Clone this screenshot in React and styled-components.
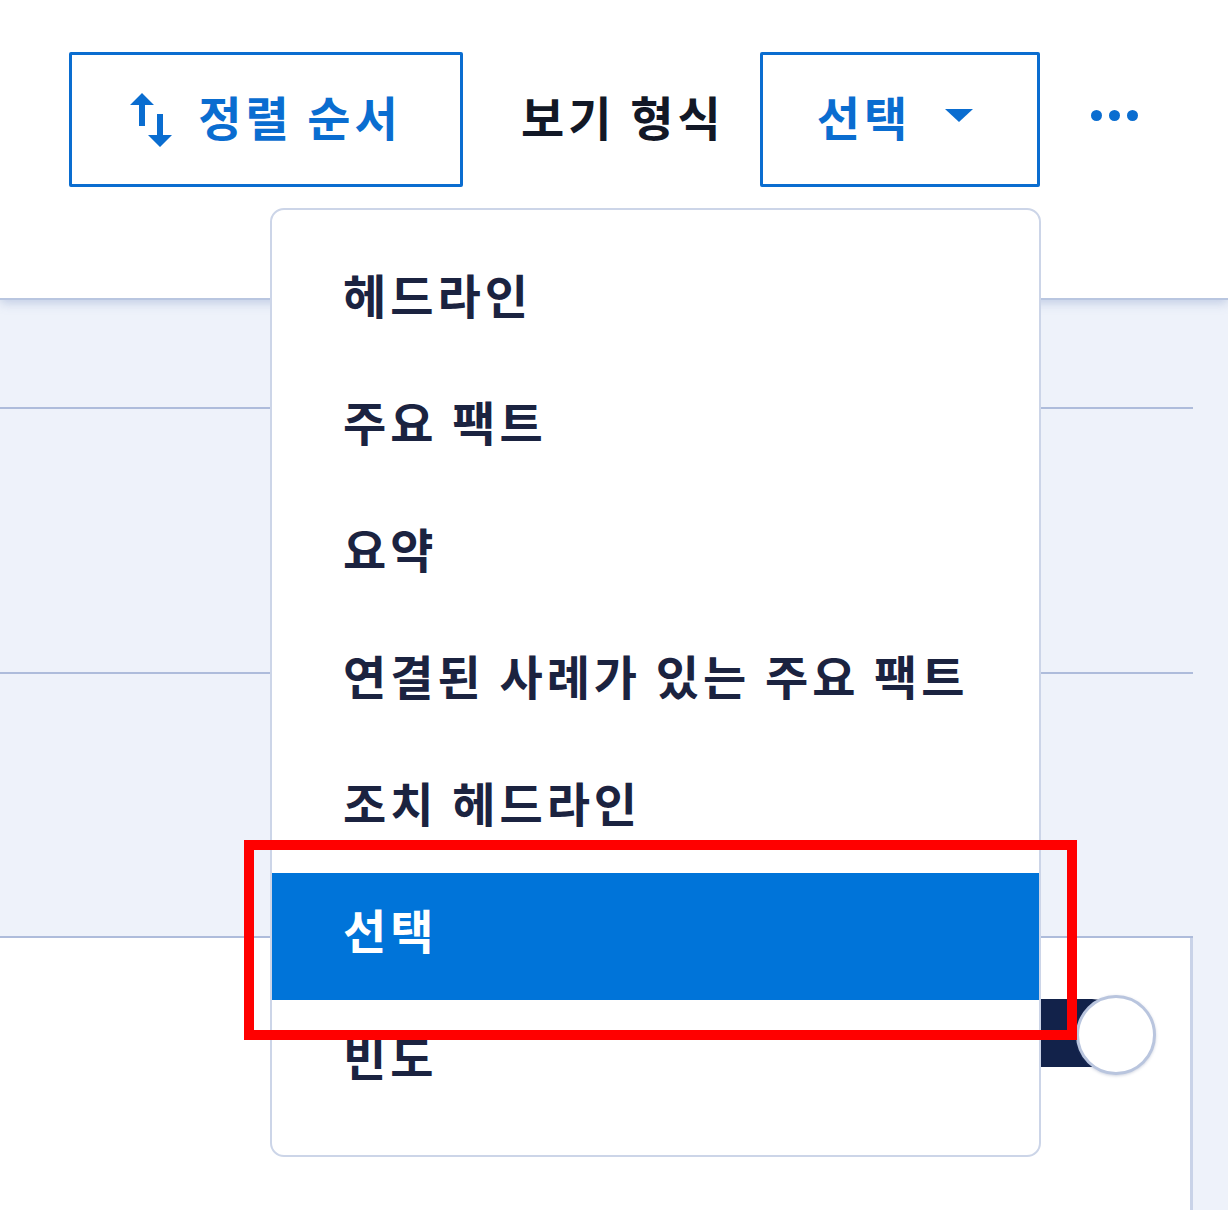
import React from "react";
import styled, { createGlobalStyle } from "styled-components";

const Global = createGlobalStyle`
  html, body { margin: 0; padding: 0; background: #ffffff; }
  body { overflow: hidden; font-family: "Noto Sans CJK KR", "Noto Sans", sans-serif; }
`;

const BLUE = "#0a6dd0";

const Page = styled.div`
  position: relative;
  width: 1228px;
  height: 1210px;
  overflow: hidden;
  background: #eef2fa;
`;

const Header = styled.header`
  position: relative;
  z-index: 1;
  box-sizing: border-box;
  height: 298px;
  background: #ffffff;
  display: flex;
  align-items: flex-start;
  padding: 52px 0 0 69px;
  box-shadow: 0 2px 0 #b9c6e0, 0 5px 10px rgba(110, 135, 190, 0.35);
`;

const OutlineButton = styled.button`
  box-sizing: border-box;
  height: 135px;
  width: ${(p) => p.$w}px;
  margin-left: ${(p) => p.$ml || 0}px;
  border: 3px solid ${BLUE};
  border-radius: 2px;
  background: #fff;
  color: ${BLUE};
  font-family: inherit;
  font-size: 47px;
  font-weight: 700;
  letter-spacing: 4px;
  display: flex;
  align-items: center;
  justify-content: ${(p) => (p.$start ? "flex-start" : "center")};
  padding: 0 0 0 ${(p) => p.$pl || 0}px;
  gap: ${(p) => p.$gap}px;
  cursor: pointer;
`;

const ButtonText = styled.span`
  line-height: 1;
  position: relative;
  top: -4px;
`;

const Label = styled.div`
  height: 135px;
  margin-left: 58px;
  display: flex;
  align-items: center;
  font-size: 47px;
  font-weight: 700;
  letter-spacing: 4px;
  color: #121826;
  span { position: relative; top: -4px; }
`;

const Caret = styled.span`
  width: 0;
  height: 0;
  border-left: 14px solid transparent;
  border-right: 14px solid transparent;
  border-top: 13px solid ${BLUE};
  margin-top: -8px;
`;

const More = styled.div`
  height: 135px;
  margin-left: 51px;
  display: flex;
  align-items: center;
  gap: 7px;
  margin-top: -4px;
`;

const Dot = styled.span`
  width: 11px;
  height: 11px;
  border-radius: 50%;
  background: ${BLUE};
`;

const Rows = styled.div`
  width: 1193px;
`;

const Row = styled.div`
  box-sizing: border-box;
  height: ${(p) => p.$h}px;
  border-bottom: 2px solid #aebcdb;
`;

const Card = styled.div`
  box-sizing: border-box;
  width: 1193px;
  height: 272px;
  background: #ffffff;
  border-right: 3px solid #c9d3e8;
  display: flex;
  justify-content: flex-end;
  padding: 57px 34px 0 0;
`;

const Switch = styled.div`
  position: relative;
  width: 170px;
  height: 82px;
`;

const Track = styled.div`
  position: absolute;
  left: 0;
  right: 30px;
  top: 4px;
  height: 68px;
  border-radius: 34px;
  background: #12224a;
`;

const Knob = styled.div`
  position: absolute;
  right: 0;
  top: 0;
  box-sizing: border-box;
  width: 80px;
  height: 80px;
  border-radius: 50%;
  background: #ffffff;
  border: 3px solid #b9c5de;
  box-shadow: 0 1px 3px rgba(60, 80, 130, 0.25);
`;

const Menu = styled.ul`
  position: absolute;
  z-index: 2;
  left: 270px;
  top: 208px;
  box-sizing: border-box;
  width: 771px;
  height: 949px;
  margin: 0;
  padding: 28px 0 0;
  list-style: none;
  background: #ffffff;
  border: 2px solid #ccd5e8;
  border-radius: 14px;
`;

const MenuItem = styled.li`
  box-sizing: border-box;
  height: 127px;
  display: flex;
  align-items: center;
  padding-left: 71px;
  font-size: 47px;
  font-weight: 700;
  letter-spacing: 4px;
  color: ${(p) => (p.$active ? "#ffffff" : "#1b2340")};
  background: ${(p) => (p.$active ? "#0074d9" : "transparent")};
  span { position: relative; top: -8px; }
`;

const Highlight = styled.div`
  position: absolute;
  z-index: 3;
  left: 244px;
  top: 840px;
  width: 833px;
  height: 200px;
  box-sizing: border-box;
  border: 10px solid #ff0000;
  pointer-events: none;
`;

const SortIcon = () => (
  <svg width="42" height="54" viewBox="5 3 14 18" fill={BLUE} aria-hidden="true">
    <path d="M16 17.01V10h-2v7.01h-3L15 21l4-3.99h-3zM9 3L5 6.99h3V14h2V6.99h3L9 3z" />
  </svg>
);

const items = [
  "헤드라인",
  "주요 팩트",
  "요약",
  "연결된 사례가 있는 주요 팩트",
  "조치 헤드라인",
  "선택",
  "빈도",
];

export default function App() {
  return (
    <>
      <Global />
      <Page>
        <Header>
          <OutlineButton $w={394} $gap={26}>
            <SortIcon />
            <ButtonText>정렬 순서</ButtonText>
          </OutlineButton>
          <Label>
            <span>보기 형식</span>
          </Label>
          <OutlineButton $w={280} $ml={35} $start $pl={54} $gap={34}>
            <ButtonText>선택</ButtonText>
            <Caret />
          </OutlineButton>
          <More>
            <Dot />
            <Dot />
            <Dot />
          </More>
        </Header>
        <Rows>
          <Row $h={111} />
          <Row $h={265} />
          <Row $h={264} />
          <Card>
            <Switch>
              <Track />
              <Knob />
            </Switch>
          </Card>
        </Rows>
        <Menu>
          {items.map((t) => (
            <MenuItem key={t} $active={t === "선택"}>
              <span>{t}</span>
            </MenuItem>
          ))}
        </Menu>
        <Highlight />
      </Page>
    </>
  );
}
